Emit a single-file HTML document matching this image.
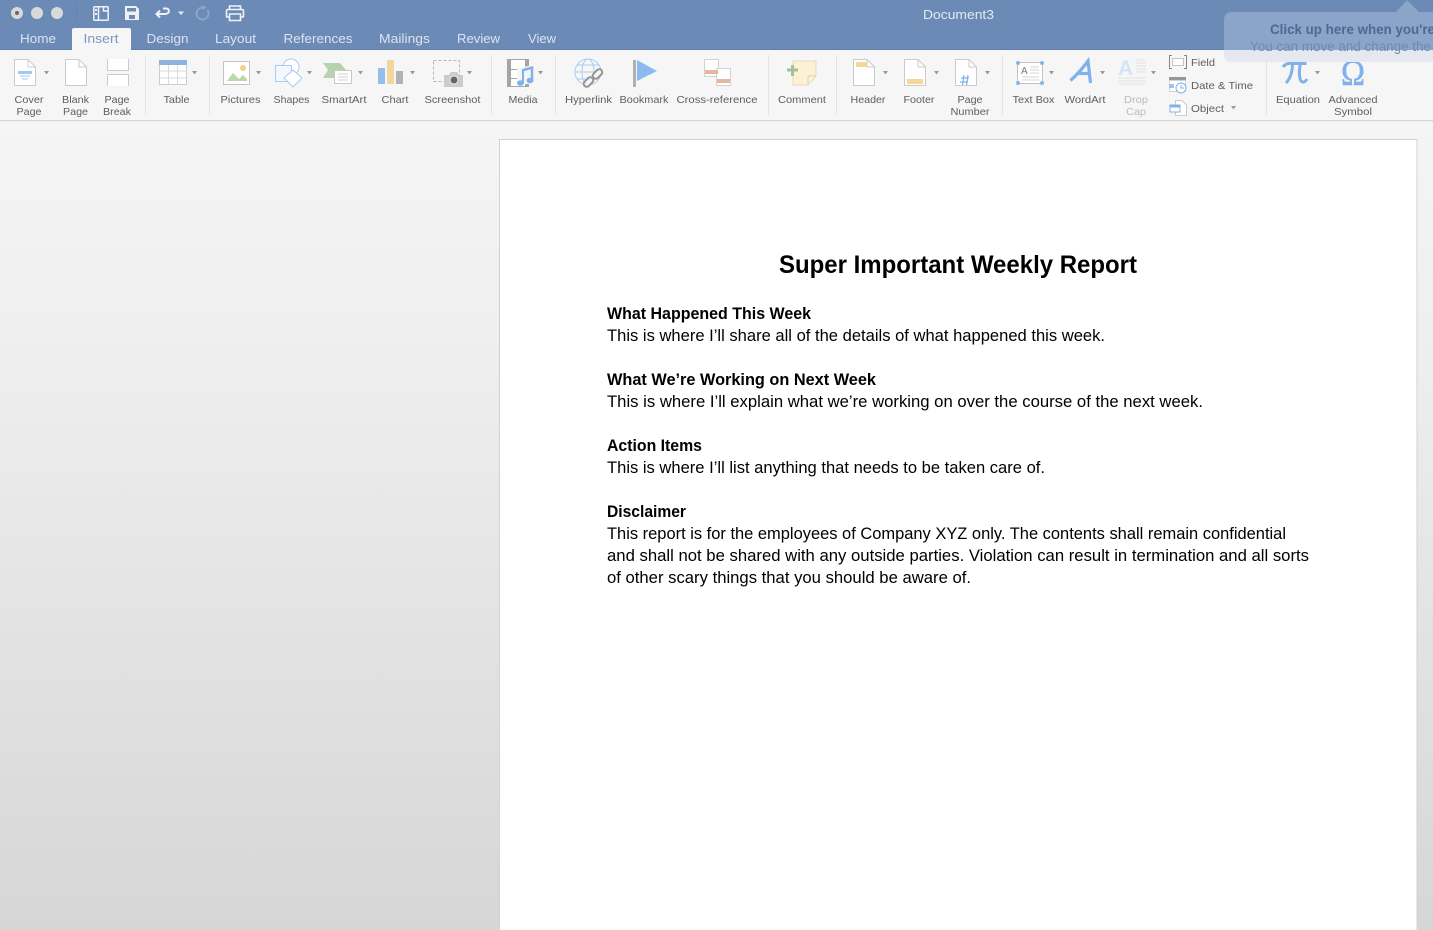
<!DOCTYPE html>
<html><head><meta charset="utf-8"><title>Document3</title>
<style>
html,body{margin:0;padding:0;width:1433px;height:930px;overflow:hidden;background:#eee}
svg{display:block}
.l{font:10.5px "Liberation Sans",sans-serif;fill:#5e5e5e;text-anchor:middle}
.s{font:10.5px "Liberation Sans",sans-serif;fill:#5e5e5e}
.t{font:13px "Liberation Sans",sans-serif;fill:#dbe4f0;text-anchor:middle}
.b{font:16.5px "Liberation Sans",sans-serif;fill:#000}
.h{font:bold 16.5px "Liberation Sans",sans-serif;fill:#000}
.c{fill:#9a9a9a}
.pg{fill:#fff;stroke:#cbcbcb;stroke-width:1}
</style></head><body>
<svg width="1433" height="930" viewBox="0 0 1433 930" xmlns="http://www.w3.org/2000/svg">
<defs>
<linearGradient id="bg" x1="0" y1="0" x2="0" y2="1"><stop offset="0" stop-color="#f5f5f5"/><stop offset=".3" stop-color="#eeeeee"/><stop offset="1" stop-color="#d6d6d6"/></linearGradient>
<symbol id="doc" viewBox="0 0 22 27" overflow="visible"><path class="pg" d="M.5.5H14L21.500 8V26.500H.5Z"/><path d="M14 .5V8H21.500" fill="none" stroke="#cbcbcb"/></symbol>
</defs>
<rect y="122" width="1433" height="808" fill="url(#bg)"/>
<rect x="0" y="0" width="1433" height="50" fill="#6c8ab6"/>
<rect y="49" width="1433" height="1" fill="#6280ad"/>
<rect y="50" width="1433" height="71" fill="#f6f6f6"/>
<rect y="120" width="1433" height="1" fill="#d6d6d6"/>
<rect y="121" width="1433" height="1" fill="#ececec"/>

<!-- traffic lights -->
<circle cx="17" cy="13" r="6" fill="#d9d9d9"/><circle cx="17" cy="13" r="2" fill="#6a6a6a"/>
<circle cx="37" cy="13" r="6" fill="#d9d9d9"/>
<circle cx="57" cy="13" r="6" fill="#d9d9d9"/>
<rect x="76" y="5" width="1" height="16" fill="#6582ae"/>
<!-- quick access -->
<g fill="none" stroke="#f0f3f8" stroke-width="1.500">
<rect x="93.800" y="6.800" width="14.400" height="13.400" rx="1"/><path d="M98.500 6.800V20.200"/>
<path d="M103.500 7V11H108"/>
<path d="M160 10.500L156.500 14L160 17.500M157 14H165C170 14 170 8.500 166 8.500H163" stroke-width="2"/>
<path d="M229.500 9V6H240.500V9M229.500 17H227Q226.500 17 226.500 16V11Q226.500 9.500 228 9.500H242Q243.500 9.500 243.500 11V16Q243.500 17 243 17H240.500M229.500 14H240.500V20.500H229.500Z" stroke-width="1.600"/>
</g>
<rect x="95" y="9" width="2" height="2" fill="#f0f3f8"/><rect x="95" y="13" width="2" height="2" fill="#f0f3f8"/>
<path d="M125 6H136L139 9V20H125Z" fill="#eef1f6"/>
<rect x="127" y="8" width="9" height="3.500" fill="#6c8ab6"/><rect x="129" y="15" width="6" height="4" fill="#6c8ab6"/>
<path d="M178 11.500H184L181 15Z" fill="#e6ebf3"/>
<path d="M207.500 10A6 6 0 1 1 203 7.500" fill="none" stroke="#8ba5ca" stroke-width="2"/><path d="M202 5L207 7.500L202 10Z" fill="#8ba5ca"/>

<!-- title -->
<text x="958.500" y="19" class="t" style="fill:#e4eaf3" textLength="71" lengthAdjust="spacingAndGlyphs">Document3</text>

<!-- tabs -->
<path d="M72 50V30Q72 28 74 28H129Q131 28 131 30V50Z" fill="#f6f6f6"/>
<text x="38" y="43" class="t" textLength="36" lengthAdjust="spacingAndGlyphs">Home</text>
<text x="101" y="43" class="t" style="fill:#7a97c2" textLength="35" lengthAdjust="spacingAndGlyphs">Insert</text>
<text x="167.500" y="43" class="t" textLength="42" lengthAdjust="spacingAndGlyphs">Design</text>
<text x="235.500" y="43" class="t" textLength="41" lengthAdjust="spacingAndGlyphs">Layout</text>
<text x="318" y="43" class="t" textLength="69" lengthAdjust="spacingAndGlyphs">References</text>
<text x="404.500" y="43" class="t" textLength="51" lengthAdjust="spacingAndGlyphs">Mailings</text>
<text x="478.500" y="43" class="t" textLength="43" lengthAdjust="spacingAndGlyphs">Review</text>
<text x="542" y="43" class="t" textLength="28" lengthAdjust="spacingAndGlyphs">View</text>

<!-- separators -->
<g fill="#e3e3e3">
<rect x="145" y="55" width="1" height="60"/><rect x="209" y="55" width="1" height="60"/><rect x="491" y="55" width="1" height="60"/><rect x="555" y="55" width="1" height="60"/><rect x="768" y="55" width="1" height="60"/><rect x="836" y="55" width="1" height="60"/><rect x="1002" y="55" width="1" height="60"/><rect x="1266" y="55" width="1" height="60"/>
</g>

<!-- carets -->
<g class="c">
<path d="M44 71H49L46.500 74.500Z"/><path d="M192 71H197L194.500 74.500Z"/><path d="M256 71H261L258.500 74.500Z"/><path d="M307 71H312L309.500 74.500Z"/><path d="M358 71H363L360.500 74.500Z"/><path d="M410 71H415L412.500 74.500Z"/><path d="M467 71H472L469.500 74.500Z"/><path d="M538 71H543L540.500 74.500Z"/><path d="M883 71H888L885.500 74.500Z"/><path d="M934 71H939L936.500 74.500Z"/><path d="M985 71H990L987.500 74.500Z"/><path d="M1049 71H1054L1051.500 74.500Z"/><path d="M1100 71H1105L1102.500 74.500Z"/><path d="M1151 71H1156L1153.500 74.500Z"/><path d="M1231 106H1236L1233.500 109.500Z"/><path d="M1315 71H1320L1317.500 74.500Z"/>
</g>

<!-- cover -->
<use href="#doc" x="14" y="59" width="22" height="27"/>
<rect x="18" y="71" width="14" height="3" fill="#a3c9f0"/><path d="M20 76H30M22 79H28" stroke="#a3c9f0"/>
<!-- blank -->
<use href="#doc" x="65" y="59" width="22" height="27"/>
<!-- page break -->
<path class="pg" d="M107.500 59V70.500H128.500V59"/><path class="pg" d="M107.500 86V74.500H128.500V86"/>
<!-- table -->
<rect x="159.500" y="60.500" width="27" height="24" fill="#fff" stroke="#cdcdcd"/><rect x="159" y="60" width="28" height="5" fill="#8fb3dd"/>
<path d="M168.500 65V84M177.500 65V84M160 71H187M160 78H187" stroke="#dadada"/>
<!-- pictures -->
<rect x="223.500" y="61.500" width="26" height="23" fill="#fff" stroke="#c4c4c4"/><circle cx="243" cy="68" r="3" fill="#f2cf8b"/><path d="M227 81L233 73L239 79L243 75L247 79V81Z" fill="#b9d8ae"/>
<!-- shapes -->
<g fill="#fff" stroke="#a5cdf2" stroke-width="1"><circle cx="291" cy="67" r="8"/><rect x="275.500" y="65.500" width="16" height="16" fill="#f2f8fd"/><path d="M293 70L302 78L293 87L284 78Z"/></g>
<!-- smartart -->
<path d="M323 63H340L346 70L340 78H323L328 70Z" fill="#b7d3ad"/><rect x="334.500" y="70.500" width="17" height="13" fill="#fff" stroke="#c8c8c8"/><path d="M338 74H348M338 77H348M338 80H348" stroke="#d2d2d2"/>
<!-- chart -->
<rect x="378" y="68" width="7" height="16" fill="#93bdea"/><rect x="387" y="60" width="7" height="24" fill="#f3d69b"/><rect x="396" y="71" width="7" height="13" fill="#b2b2b2"/>
<!-- screenshot -->
<rect x="433.500" y="60.500" width="26" height="21" fill="none" stroke="#b4b4b4" stroke-dasharray="3 2"/>
<path d="M444 75H449L451 72H457L459 75H463V87H444Z" fill="#c9cbce"/><circle cx="454" cy="80" r="4" fill="#666" stroke="#eee"/>
<!-- media -->
<rect x="507.500" y="59.500" width="21" height="27" fill="#fff" stroke="#a5a5a5"/><rect x="508" y="60" width="3" height="26" fill="#a5a5a5"/><rect x="525" y="60" width="3" height="26" fill="#a5a5a5"/><path d="M511 69.500H525M511 78.500H525" stroke="#a5a5a5"/>
<path d="M519 68L533 65V84H517V68Z" fill="#f6f6f6"/>
<path d="M522 70.500L532 67.500V80" fill="none" stroke="#7fb2ea" stroke-width="2.500"/><ellipse cx="520.500" cy="83" rx="3.500" ry="2.800" fill="#7fb2ea"/><ellipse cx="530" cy="80.500" rx="3.500" ry="2.800" fill="#7fb2ea"/><path d="M523 70V83" stroke="#7fb2ea" stroke-width="2"/>
<!-- hyperlink -->
<g fill="none" stroke="#a8cef2"><circle cx="588" cy="72" r="13"/><ellipse cx="588" cy="72" rx="6" ry="13"/><path d="M575 72H601M577 65H599M577 79H599"/></g>
<g fill="#f6f6f6" stroke="#959595" stroke-width="2"><rect x="583" y="79" width="11" height="6" rx="3" transform="rotate(-45 588.500 82)"/><rect x="592" y="71" width="11" height="6" rx="3" transform="rotate(-45 597.500 74)"/></g>
<!-- bookmark -->
<rect x="633" y="60" width="3" height="27" fill="#b0b0b0"/><path d="M637 60L657 71L637 81Z" fill="#8bbbee"/>
<!-- cross ref -->
<rect x="704.500" y="59.500" width="14" height="17" fill="#fff" stroke="#d2d2d2"/><rect x="716.500" y="68.500" width="14" height="17" fill="#fff" stroke="#d2d2d2"/><rect x="705" y="70" width="13" height="4" fill="#e6b69f"/><rect x="717" y="79" width="13" height="4" fill="#e6b69f"/>
<!-- comment -->
<path d="M793 61H816V76L808 85H793Z" fill="#fdf1d3" stroke="#e6dcc0"/><path d="M808 85V76H816" fill="none" stroke="#dcd1b3"/><path d="M787 70H798M792.500 65V76" stroke="#a5c09a" stroke-width="3"/>
<!-- header/footer/num -->
<use href="#doc" x="853" y="59" width="22" height="27"/><rect x="856" y="62" width="11" height="5" fill="#f6d797"/>
<use href="#doc" x="904" y="59" width="22" height="27"/><rect x="907" y="79" width="16" height="5" fill="#f6d797"/>
<use href="#doc" x="955" y="59" width="22" height="27"/>
<path d="M961 78H969M960 82H968M964 75L962.500 85M968 75L966.500 85" fill="none" stroke="#7fb2ea" stroke-width="1.200"/>
<!-- text box -->
<rect x="1017.500" y="62.500" width="25" height="21" fill="#fff" stroke="#c4c4c4"/>
<g fill="#85b5ea"><circle cx="1018" cy="63" r="2"/><circle cx="1042" cy="63" r="2"/><circle cx="1018" cy="83" r="2"/><circle cx="1042" cy="83" r="2"/></g>
<text x="1021" y="74" style="font:10px 'Liberation Sans',sans-serif;fill:#777">A</text><path d="M1030 67H1039M1030 70H1039M1030 73H1039M1022 77H1039M1022 80H1039" stroke="#d4d4d4"/>
<!-- wordart -->
<path d="M1070.500 80.500Q1080 72 1088 61L1090.500 83M1076.500 73.500H1089" fill="none" stroke="#7fb2ea" stroke-width="3.200"/>
<!-- drop cap -->
<text x="1118" y="75" style="font:bold 21px 'Liberation Sans',sans-serif;fill:#d2e4f6">A</text>
<path d="M1136 60H1146M1136 63H1146M1136 66H1146M1136 69H1146M1136 72H1146M1118 78H1146M1118 81H1146M1118 84H1146" stroke="#e2e2e2"/>
<!-- field -->
<path d="M1172 55.500H1169.500V68.500H1172M1184 55.500H1186.500V68.500H1184" fill="none" stroke="#858585"/><rect x="1172.500" y="58.500" width="11" height="7" fill="#fff" stroke="#c4c4c4"/>
<text x="1191" y="66" class="s" textLength="24" lengthAdjust="spacingAndGlyphs">Field</text>
<!-- date -->
<rect x="1169" y="77" width="17" height="3" fill="#969696"/><rect x="1169.500" y="80.500" width="16" height="11" fill="#fff" stroke="#d2d2d2"/><rect x="1169" y="84" width="5" height="4" fill="#9cc3ec"/><circle cx="1181" cy="88" r="5" fill="#fff" stroke="#7fb2ea"/><path d="M1181 85V88H1184" fill="none" stroke="#7fb2ea"/>
<text x="1191" y="89" class="s" textLength="62" lengthAdjust="spacingAndGlyphs">Date &amp; Time</text>
<!-- object -->
<path class="pg" d="M1175.500 100.500H1182L1186.500 105V115.500H1175.500Z"/><rect x="1170" y="105" width="10" height="7" fill="#fff" stroke="#7fb2ea"/><rect x="1170" y="105" width="10" height="2.500" fill="#7fb2ea"/>
<text x="1191" y="112" class="s" textLength="33" lengthAdjust="spacingAndGlyphs">Object</text>
<!-- equation -->
<path d="M1283 67Q1286 62.500 1292 63.500H1306.500M1292.500 63.500Q1292.500 76 1286 83M1300.500 63.500Q1298 75 1301 81Q1304 84 1307 79" fill="none" stroke="#7fb2ea" stroke-width="3"/>
<text x="1353" y="85" text-anchor="middle" textLength="24" lengthAdjust="spacingAndGlyphs" style="font:36px 'Liberation Serif',serif;fill:#7fb2ea;stroke:#7fb2ea;stroke-width:.5">Ω</text>

<!-- labels -->
<text x="29" y="103" class="l" textLength="29" lengthAdjust="spacingAndGlyphs">Cover</text><text x="29" y="115" class="l" textLength="25" lengthAdjust="spacingAndGlyphs">Page</text>
<text x="75.500" y="103" class="l" textLength="27" lengthAdjust="spacingAndGlyphs">Blank</text><text x="75.500" y="115" class="l" textLength="25" lengthAdjust="spacingAndGlyphs">Page</text>
<text x="117" y="103" class="l" textLength="25" lengthAdjust="spacingAndGlyphs">Page</text><text x="117" y="115" class="l" textLength="28" lengthAdjust="spacingAndGlyphs">Break</text>
<text x="176.500" y="103" class="l" textLength="26" lengthAdjust="spacingAndGlyphs">Table</text>
<text x="240.500" y="103" class="l" textLength="40" lengthAdjust="spacingAndGlyphs">Pictures</text>
<text x="291.500" y="103" class="l" textLength="36" lengthAdjust="spacingAndGlyphs">Shapes</text>
<text x="344" y="103" class="l" textLength="45" lengthAdjust="spacingAndGlyphs">SmartArt</text>
<text x="395" y="103" class="l" textLength="27" lengthAdjust="spacingAndGlyphs">Chart</text>
<text x="452.500" y="103" class="l" textLength="56" lengthAdjust="spacingAndGlyphs">Screenshot</text>
<text x="523" y="103" class="l" textLength="29" lengthAdjust="spacingAndGlyphs">Media</text>
<text x="588.500" y="103" class="l" textLength="47" lengthAdjust="spacingAndGlyphs">Hyperlink</text>
<text x="644" y="103" class="l" textLength="49" lengthAdjust="spacingAndGlyphs">Bookmark</text>
<text x="717" y="103" class="l" textLength="81" lengthAdjust="spacingAndGlyphs">Cross-reference</text>
<text x="802" y="103" class="l" textLength="48" lengthAdjust="spacingAndGlyphs">Comment</text>
<text x="868" y="103" class="l" textLength="35" lengthAdjust="spacingAndGlyphs">Header</text>
<text x="919" y="103" class="l" textLength="31" lengthAdjust="spacingAndGlyphs">Footer</text>
<text x="970" y="103" class="l" textLength="25" lengthAdjust="spacingAndGlyphs">Page</text><text x="970" y="115" class="l" textLength="39" lengthAdjust="spacingAndGlyphs">Number</text>
<text x="1033.500" y="103" class="l" textLength="42" lengthAdjust="spacingAndGlyphs">Text Box</text>
<text x="1085" y="103" class="l" textLength="41" lengthAdjust="spacingAndGlyphs">WordArt</text>
<text x="1136" y="103" class="l" style="fill:#bbb" textLength="24" lengthAdjust="spacingAndGlyphs">Drop</text><text x="1136" y="115" class="l" style="fill:#bbb" textLength="20" lengthAdjust="spacingAndGlyphs">Cap</text>
<text x="1298" y="103" class="l" textLength="44" lengthAdjust="spacingAndGlyphs">Equation</text>
<text x="1353" y="103" class="l" textLength="49" lengthAdjust="spacingAndGlyphs">Advanced</text><text x="1353" y="115" class="l" textLength="38" lengthAdjust="spacingAndGlyphs">Symbol</text>

<!-- tooltip -->
<path d="M1224 50V20Q1224 12 1232 12H1396L1407 0L1419 12H1433V50Z" fill="#8aa4ca"/>
<path d="M1224 50H1433V62H1232Q1224 62 1224 54Z" fill="#e5e9ef"/>
<text x="1270" y="34" style="font:bold 13.500px 'Liberation Sans',sans-serif;fill:#4f6793" textLength="165" lengthAdjust="spacingAndGlyphs">Click up here when you're</text>
<text x="1250" y="51" style="font:13.500px 'Liberation Sans',sans-serif;fill:#7189ae" textLength="181" lengthAdjust="spacingAndGlyphs">You can move and change the</text>

<!-- page -->
<rect x="499.500" y="139.500" width="917.500" height="800" fill="#fff" stroke="#d2d2d2"/>
<text x="779" y="273" style="font:bold 25px 'Liberation Sans',sans-serif;fill:#000" textLength="358" lengthAdjust="spacingAndGlyphs">Super Important Weekly Report</text>
<text x="607" y="319" class="h" textLength="204" lengthAdjust="spacingAndGlyphs">What Happened This Week</text>
<text x="607" y="341" class="b" textLength="498" lengthAdjust="spacingAndGlyphs">This is where I’ll share all of the details of what happened this week.</text>
<text x="607" y="385" class="h" textLength="269" lengthAdjust="spacingAndGlyphs">What We’re Working on Next Week</text>
<text x="607" y="407" class="b" textLength="596" lengthAdjust="spacingAndGlyphs">This is where I’ll explain what we’re working on over the course of the next week.</text>
<text x="607" y="451" class="h" textLength="95" lengthAdjust="spacingAndGlyphs">Action Items</text>
<text x="607" y="473" class="b" textLength="438" lengthAdjust="spacingAndGlyphs">This is where I’ll list anything that needs to be taken care of.</text>
<text x="607" y="517" class="h" textLength="79" lengthAdjust="spacingAndGlyphs">Disclaimer</text>
<text x="607" y="539" class="b" textLength="679" lengthAdjust="spacingAndGlyphs">This report is for the employees of Company XYZ only. The contents shall remain confidential</text>
<text x="607" y="561" class="b" textLength="702" lengthAdjust="spacingAndGlyphs">and shall not be shared with any outside parties. Violation can result in termination and all sorts</text>
<text x="607" y="583" class="b" textLength="364" lengthAdjust="spacingAndGlyphs">of other scary things that you should be aware of.</text>
</svg>
</body></html>
